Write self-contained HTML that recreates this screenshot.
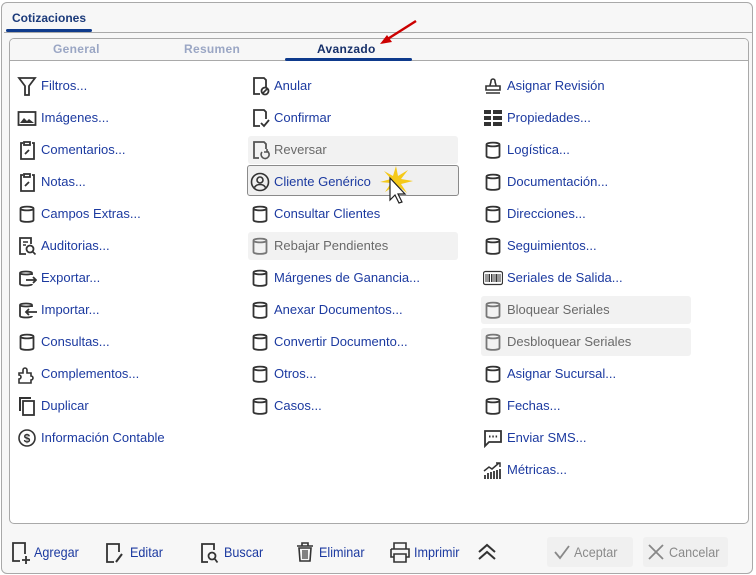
<!DOCTYPE html>
<html><head><meta charset="utf-8"><style>
*{box-sizing:border-box;margin:0;padding:0}
body{width:756px;height:575px;background:#fff;font-family:"Liberation Sans",sans-serif;position:relative;overflow:hidden}
.frame{position:absolute;left:1px;top:2px;width:752px;height:572px;border:1px solid #a9a9a9;border-radius:6px;background:#f7f7f7}
.hdr{position:absolute;left:12px;top:11px;font-size:12px;font-weight:bold;color:#1b3a7a}
.hul{position:absolute;left:6px;top:29px;width:86px;height:3px;background:#0e3a8c;border-radius:2px}
.hline{position:absolute;left:4px;top:32px;width:748px;height:1px;background:#a9a9a9}
.panel{position:absolute;left:9px;top:38px;width:740px;height:486px;border:1px solid #a9a9a9;border-radius:5px;background:#fff;overflow:hidden}
.tabs{position:absolute;left:0;top:0;width:100%;height:22px;background:#f7f7f7;border-bottom:1px solid #a9a9a9}
.tab{position:absolute;top:3px;font-size:12px;font-weight:bold;color:#9aa6c4;letter-spacing:.3px}
.tab.on{color:#16306a}
.tul{position:absolute;left:275px;top:19px;width:127px;height:3px;background:#0e3a8c;border-radius:2px}
.it{position:absolute;height:20px;line-height:20px;font-size:13px;color:#1c3aa0;white-space:nowrap;margin-top:1px}
.it svg{position:absolute;left:-24px;top:0;width:20px;height:20px}
.dis{position:absolute;background:#f2f2f2;border-radius:3px;width:210px;height:28px;margin-top:1px}
.it.g{color:#6a6a6a}
.sel{position:absolute;left:247px;top:165px;width:212px;height:31px;border:1px solid #8a8a8a;border-radius:3px;background:#f0f0f0}
.ft{position:absolute;top:543px;font-size:14px;color:#1c3aa0;height:18px;line-height:18px;transform:scaleX(.9);transform-origin:left;white-space:nowrap}
.btn{position:absolute;top:537px;height:30px;background:#f0f0f0;border-radius:3px;font-size:14px;color:#8a8a8a;line-height:30px}
</style></head><body>
<div class="frame"></div>
<div class="hdr">Cotizaciones</div><div class="hul"></div><div class="hline"></div>
<div class="panel">
<div class="tabs">
<div class="tab" style="left:43px">General</div>
<div class="tab" style="left:174px">Resumen</div>
<div class="tab on" style="left:307px">Avanzado</div>
<div class="tul"></div>
</div>
</div>
<svg style="position:absolute;left:378px;top:18px" width="42" height="28"><path d="M38 3L8 22" stroke="#c00" stroke-width="2.5"/><path d="M2 26l12-2-5-7z" fill="#c00"/></svg>

<div class="dis" style="left:248px;top:135px"></div>
<div class="dis" style="left:248px;top:231px"></div>
<div class="dis" style="left:481px;top:295px"></div>
<div class="dis" style="left:481px;top:327px"></div>
<div class="sel"></div>

<!-- col1 -->
<div class="it" style="left:41px;top:75px"><svg viewBox="0 0 20 20"><path d="M2 2h16l-6 8v9H8v-9z" fill="none" stroke="#333" stroke-width="1.8"/></svg>Filtros...</div>
<div class="it" style="left:41px;top:107px"><svg viewBox="0 0 20 20"><rect x="1.5" y="4" width="17" height="13" fill="none" stroke="#333" stroke-width="1.8"/><path d="M3 15l4-5 3 3 2-2 5 4z" fill="#333"/></svg>Imágenes...</div>
<div class="it" style="left:41px;top:139px"><svg viewBox="0 0 20 20"><path d="M6 3H4v16h13V3h-2M7 2h6v3H7z M8 14l4-4" fill="none" stroke="#333" stroke-width="1.8"/></svg>Comentarios...</div>
<div class="it" style="left:41px;top:171px"><svg viewBox="0 0 20 20"><path d="M6 3H4v16h13V3h-2M7 2h6v3H7z M8 14l4-4" fill="none" stroke="#333" stroke-width="1.8"/></svg>Notas...</div>
<div class="it" style="left:41px;top:203px"><svg viewBox="0 0 20 20"><path d="M3.5 4.5c0-2.5 13-2.5 13 0v11.5c0 2.5-13 2.5-13 0z M3.5 4.5c0 2.5 13 2.5 13 0" fill="none" stroke="#333" stroke-width="1.8"/></svg>Campos Extras...</div>
<div class="it" style="left:41px;top:235px"><svg viewBox="0 0 20 20"><path d="M9 18H3V2h11v6" fill="none" stroke="#333" stroke-width="1.8"/><circle cx="13" cy="13" r="3.5" fill="none" stroke="#333" stroke-width="1.8"/><path d="M15.5 15.5l3 3M6 6h5M6 9h3" stroke="#333" stroke-width="1.6"/></svg>Auditorias...</div>
<div class="it" style="left:41px;top:267px"><svg viewBox="0 0 20 20"><path d="M15 7V5c0-2-12-2-12 0v11c0 2 12 2 12 0M3 5c0 2 12 2 12 0M9 12h10M16 9l3 3-3 3" fill="none" stroke="#333" stroke-width="1.8"/></svg>Exportar...</div>
<div class="it" style="left:41px;top:299px"><svg viewBox="0 0 20 20"><path d="M15 7V5c0-2-12-2-12 0v11c0 2 12 2 12 0M3 5c0 2 12 2 12 0M20 12H9M12 9l-3 3 3 3" fill="none" stroke="#333" stroke-width="1.8"/></svg>Importar...</div>
<div class="it" style="left:41px;top:331px"><svg viewBox="0 0 20 20"><path d="M3.5 4.5c0-2.5 13-2.5 13 0v11.5c0 2.5-13 2.5-13 0z M3.5 4.5c0 2.5 13 2.5 13 0" fill="none" stroke="#333" stroke-width="1.8"/></svg>Consultas...</div>
<div class="it" style="left:41px;top:363px"><svg viewBox="0 0 20 20"><path d="M2 9h4V6a2 2 0 014 0v3h4v3a2 2 0 010 4v3H2v-4a2 2 0 000-4z" fill="none" stroke="#333" stroke-width="1.6"/></svg>Complementos...</div>
<div class="it" style="left:41px;top:395px"><svg viewBox="0 0 20 20"><path d="M3 15V2h11" fill="none" stroke="#333" stroke-width="2"/><rect x="6" y="5" width="11" height="14" fill="none" stroke="#333" stroke-width="1.8"/></svg>Duplicar</div>
<div class="it" style="left:41px;top:427px"><svg viewBox="0 0 20 20"><circle cx="10" cy="10" r="8" fill="none" stroke="#333" stroke-width="1.6"/><text x="10" y="14.5" font-size="12" text-anchor="middle" font-family="Liberation Sans" font-weight="bold" fill="#333">$</text></svg>Información Contable</div>

<!-- col2 -->
<div class="it" style="left:274px;top:75px"><svg viewBox="0 0 20 20"><path d="M10 18H4V2h10l2 2v7" fill="none" stroke="#333" stroke-width="1.8"/><circle cx="15" cy="15" r="3.5" fill="none" stroke="#333" stroke-width="1.8"/><path d="M12.5 17.5l5-5" stroke="#333" stroke-width="1.6"/></svg>Anular</div>
<div class="it" style="left:274px;top:107px"><svg viewBox="0 0 20 20"><path d="M10 18H4V2h10l2 2v7" fill="none" stroke="#333" stroke-width="1.8"/><path d="M11 15l3 3 5-6" fill="none" stroke="#333" stroke-width="1.8"/></svg>Confirmar</div>
<div class="it g" style="left:274px;top:139px"><svg viewBox="0 0 20 20"><path d="M9 18H4V2h10l2 2v5" fill="none" stroke="#555" stroke-width="1.8"/><path d="M12 12a4 4 0 105-1M17 9v3h-3" fill="none" stroke="#555" stroke-width="1.6"/></svg>Reversar</div>
<div class="it" style="left:274px;top:171px"><svg viewBox="0 0 20 20"><circle cx="10" cy="10" r="8.5" fill="none" stroke="#333" stroke-width="1.6"/><circle cx="10" cy="8" r="3" fill="none" stroke="#333" stroke-width="1.6"/><path d="M4.5 15.5c2-4 9-4 11 0" fill="none" stroke="#333" stroke-width="1.6"/></svg>Cliente Genérico</div>
<div class="it" style="left:274px;top:203px"><svg viewBox="0 0 20 20"><path d="M3.5 4.5c0-2.5 13-2.5 13 0v11.5c0 2.5-13 2.5-13 0z M3.5 4.5c0 2.5 13 2.5 13 0" fill="none" stroke="#333" stroke-width="1.8"/></svg>Consultar Clientes</div>
<div class="it g" style="left:274px;top:235px"><svg viewBox="0 0 20 20"><path d="M3.5 4.5c0-2.5 13-2.5 13 0v11.5c0 2.5-13 2.5-13 0z M3.5 4.5c0 2.5 13 2.5 13 0" fill="none" stroke="#777" stroke-width="1.8"/></svg>Rebajar Pendientes</div>
<div class="it" style="left:274px;top:267px"><svg viewBox="0 0 20 20"><path d="M3.5 4.5c0-2.5 13-2.5 13 0v11.5c0 2.5-13 2.5-13 0z M3.5 4.5c0 2.5 13 2.5 13 0" fill="none" stroke="#333" stroke-width="1.8"/></svg>Márgenes de Ganancia...</div>
<div class="it" style="left:274px;top:299px"><svg viewBox="0 0 20 20"><path d="M3.5 4.5c0-2.5 13-2.5 13 0v11.5c0 2.5-13 2.5-13 0z M3.5 4.5c0 2.5 13 2.5 13 0" fill="none" stroke="#333" stroke-width="1.8"/></svg>Anexar Documentos...</div>
<div class="it" style="left:274px;top:331px"><svg viewBox="0 0 20 20"><path d="M3.5 4.5c0-2.5 13-2.5 13 0v11.5c0 2.5-13 2.5-13 0z M3.5 4.5c0 2.5 13 2.5 13 0" fill="none" stroke="#333" stroke-width="1.8"/></svg>Convertir Documento...</div>
<div class="it" style="left:274px;top:363px"><svg viewBox="0 0 20 20"><path d="M3.5 4.5c0-2.5 13-2.5 13 0v11.5c0 2.5-13 2.5-13 0z M3.5 4.5c0 2.5 13 2.5 13 0" fill="none" stroke="#333" stroke-width="1.8"/></svg>Otros...</div>
<div class="it" style="left:274px;top:395px"><svg viewBox="0 0 20 20"><path d="M3.5 4.5c0-2.5 13-2.5 13 0v11.5c0 2.5-13 2.5-13 0z M3.5 4.5c0 2.5 13 2.5 13 0" fill="none" stroke="#333" stroke-width="1.8"/></svg>Casos...</div>

<svg style="position:absolute;left:376px;top:164px" width="40" height="44"><path d="M20 2l2 10 10-6-7 9 12 2-12 3 6 9-9-7-1 10-3-10-9 6 6-9-11-1 11-3-7-8 9 5z" fill="#f5c400" opacity=".9"/><path d="M14 14v22l5-5 4 8 3-1-4-8 7 0z" fill="#fff" stroke="#222" stroke-width="1.2"/></svg>

<!-- col3 -->
<div class="it" style="left:507px;top:75px"><svg viewBox="0 0 20 20"><path d="M7 10c0-2 1-3 1-5a2 2 0 014 0c0 2 1 3 1 5M3 10h14v4H3zM3 17h14" fill="none" stroke="#333" stroke-width="1.6"/></svg>Asignar Revisión</div>
<div class="it" style="left:507px;top:107px"><svg viewBox="0 0 20 20"><path d="M1 2h7v4H1zM10 2h9v4h-9zM1 8h7v4H1zM10 8h9v4h-9zM1 14h7v4H1zM10 14h9v4h-9z" fill="#333"/></svg>Propiedades...</div>
<div class="it" style="left:507px;top:139px"><svg viewBox="0 0 20 20"><path d="M3.5 4.5c0-2.5 13-2.5 13 0v11.5c0 2.5-13 2.5-13 0z M3.5 4.5c0 2.5 13 2.5 13 0" fill="none" stroke="#333" stroke-width="1.8"/></svg>Logística...</div>
<div class="it" style="left:507px;top:171px"><svg viewBox="0 0 20 20"><path d="M3.5 4.5c0-2.5 13-2.5 13 0v11.5c0 2.5-13 2.5-13 0z M3.5 4.5c0 2.5 13 2.5 13 0" fill="none" stroke="#333" stroke-width="1.8"/></svg>Documentación...</div>
<div class="it" style="left:507px;top:203px"><svg viewBox="0 0 20 20"><path d="M3.5 4.5c0-2.5 13-2.5 13 0v11.5c0 2.5-13 2.5-13 0z M3.5 4.5c0 2.5 13 2.5 13 0" fill="none" stroke="#333" stroke-width="1.8"/></svg>Direcciones...</div>
<div class="it" style="left:507px;top:235px"><svg viewBox="0 0 20 20"><path d="M3.5 4.5c0-2.5 13-2.5 13 0v11.5c0 2.5-13 2.5-13 0z M3.5 4.5c0 2.5 13 2.5 13 0" fill="none" stroke="#333" stroke-width="1.8"/></svg>Seguimientos...</div>
<div class="it" style="left:507px;top:267px"><svg viewBox="0 0 20 20"><rect x="0.5" y="3.5" width="19" height="13" rx="2" fill="none" stroke="#333" stroke-width="1.2"/><path d="M3 6v8M5 6v8M6.5 6v8M8.5 6v8M10 6v8M12 6v8M13.5 6v8M15 6v8M17 6v8" stroke="#333" stroke-width="1"/></svg>Seriales de Salida...</div>
<div class="it g" style="left:507px;top:299px"><svg viewBox="0 0 20 20"><path d="M3.5 4.5c0-2.5 13-2.5 13 0v11.5c0 2.5-13 2.5-13 0z M3.5 4.5c0 2.5 13 2.5 13 0" fill="none" stroke="#777" stroke-width="1.8"/></svg>Bloquear Seriales</div>
<div class="it g" style="left:507px;top:331px"><svg viewBox="0 0 20 20"><path d="M3.5 4.5c0-2.5 13-2.5 13 0v11.5c0 2.5-13 2.5-13 0z M3.5 4.5c0 2.5 13 2.5 13 0" fill="none" stroke="#777" stroke-width="1.8"/></svg>Desbloquear Seriales</div>
<div class="it" style="left:507px;top:363px"><svg viewBox="0 0 20 20"><path d="M3.5 4.5c0-2.5 13-2.5 13 0v11.5c0 2.5-13 2.5-13 0z M3.5 4.5c0 2.5 13 2.5 13 0" fill="none" stroke="#333" stroke-width="1.8"/></svg>Asignar Sucursal...</div>
<div class="it" style="left:507px;top:395px"><svg viewBox="0 0 20 20"><path d="M3.5 4.5c0-2.5 13-2.5 13 0v11.5c0 2.5-13 2.5-13 0z M3.5 4.5c0 2.5 13 2.5 13 0" fill="none" stroke="#333" stroke-width="1.8"/></svg>Fechas...</div>
<div class="it" style="left:507px;top:427px"><svg viewBox="0 0 20 20"><path d="M2 3h16v11H6l-4 4z" fill="none" stroke="#333" stroke-width="1.8"/><path d="M6 8.5h1.5M9.3 8.5h1.5M12.6 8.5h1.5" stroke="#333" stroke-width="2"/></svg>Enviar SMS...</div>
<div class="it" style="left:507px;top:459px"><svg viewBox="0 0 20 20"><path d="M2 19v-4M5 19v-6M8 19v-7M11 19v-8M14 19v-9M17 19v-10" stroke="#333" stroke-width="1.8"/><path d="M1 11l5-4 3 2 7-6M13 3h4v4" fill="none" stroke="#333" stroke-width="1.5"/></svg>Métricas...</div>

<!-- footer -->
<svg style="position:absolute;left:10px;top:541px" width="22" height="24" viewBox="0 0 22 24"><path d="M10 20H3V2h12v11" fill="none" stroke="#333" stroke-width="1.8"/><path d="M16 15v8M12 19h8" stroke="#333" stroke-width="1.8"/></svg>
<div class="ft" style="left:34px">Agregar</div>
<svg style="position:absolute;left:104px;top:541px" width="22" height="24" viewBox="0 0 22 24"><path d="M10 21H3V3h12v8" fill="none" stroke="#333" stroke-width="1.8"/><path d="M12 21l6-8" stroke="#333" stroke-width="2"/></svg>
<div class="ft" style="left:130px">Editar</div>
<svg style="position:absolute;left:199px;top:541px" width="22" height="24" viewBox="0 0 22 24"><path d="M9 21H3V3h12v6" fill="none" stroke="#333" stroke-width="1.8"/><circle cx="13" cy="15" r="3.5" fill="none" stroke="#333" stroke-width="1.8"/><path d="M15.5 17.5l3 4" stroke="#333" stroke-width="1.8"/></svg>
<div class="ft" style="left:224px">Buscar</div>
<svg style="position:absolute;left:295px;top:541px" width="20" height="22" viewBox="0 0 20 22"><path d="M2 5h16M7 5V2h6v3M4 7h12l-1 13H5z" fill="none" stroke="#333" stroke-width="1.6"/><path d="M8 9v9M10 9v9M12 9v9" stroke="#333" stroke-width="1.2"/></svg>
<div class="ft" style="left:319px">Eliminar</div>
<svg style="position:absolute;left:389px;top:541px" width="22" height="22" viewBox="0 0 22 22"><path d="M5 8V2h12v6M2 8h18v8h-3M5 16H2V8M5 13h12v8H5z" fill="none" stroke="#333" stroke-width="1.6"/></svg>
<div class="ft" style="left:414px">Imprimir</div>
<svg style="position:absolute;left:477px;top:543px" width="20" height="18" viewBox="0 0 20 18"><path d="M2 9l8-7 8 7M2 16l8-7 8 7" fill="none" stroke="#333" stroke-width="2"/></svg>
<div class="btn" style="left:547px;width:86px"><svg style="position:absolute;left:6px;top:7px" width="18" height="16"><path d="M2 8l5 6L16 2" fill="none" stroke="#888" stroke-width="1.8"/></svg><span style="position:absolute;left:27px;transform:scaleX(.9);transform-origin:left">Aceptar</span></div>
<div class="btn" style="left:643px;width:85px"><svg style="position:absolute;left:4px;top:7px" width="18" height="16"><path d="M2 1l14 14M16 1L2 15" fill="none" stroke="#888" stroke-width="1.8"/></svg><span style="position:absolute;left:26px;transform:scaleX(.9);transform-origin:left">Cancelar</span></div>
</body></html>
